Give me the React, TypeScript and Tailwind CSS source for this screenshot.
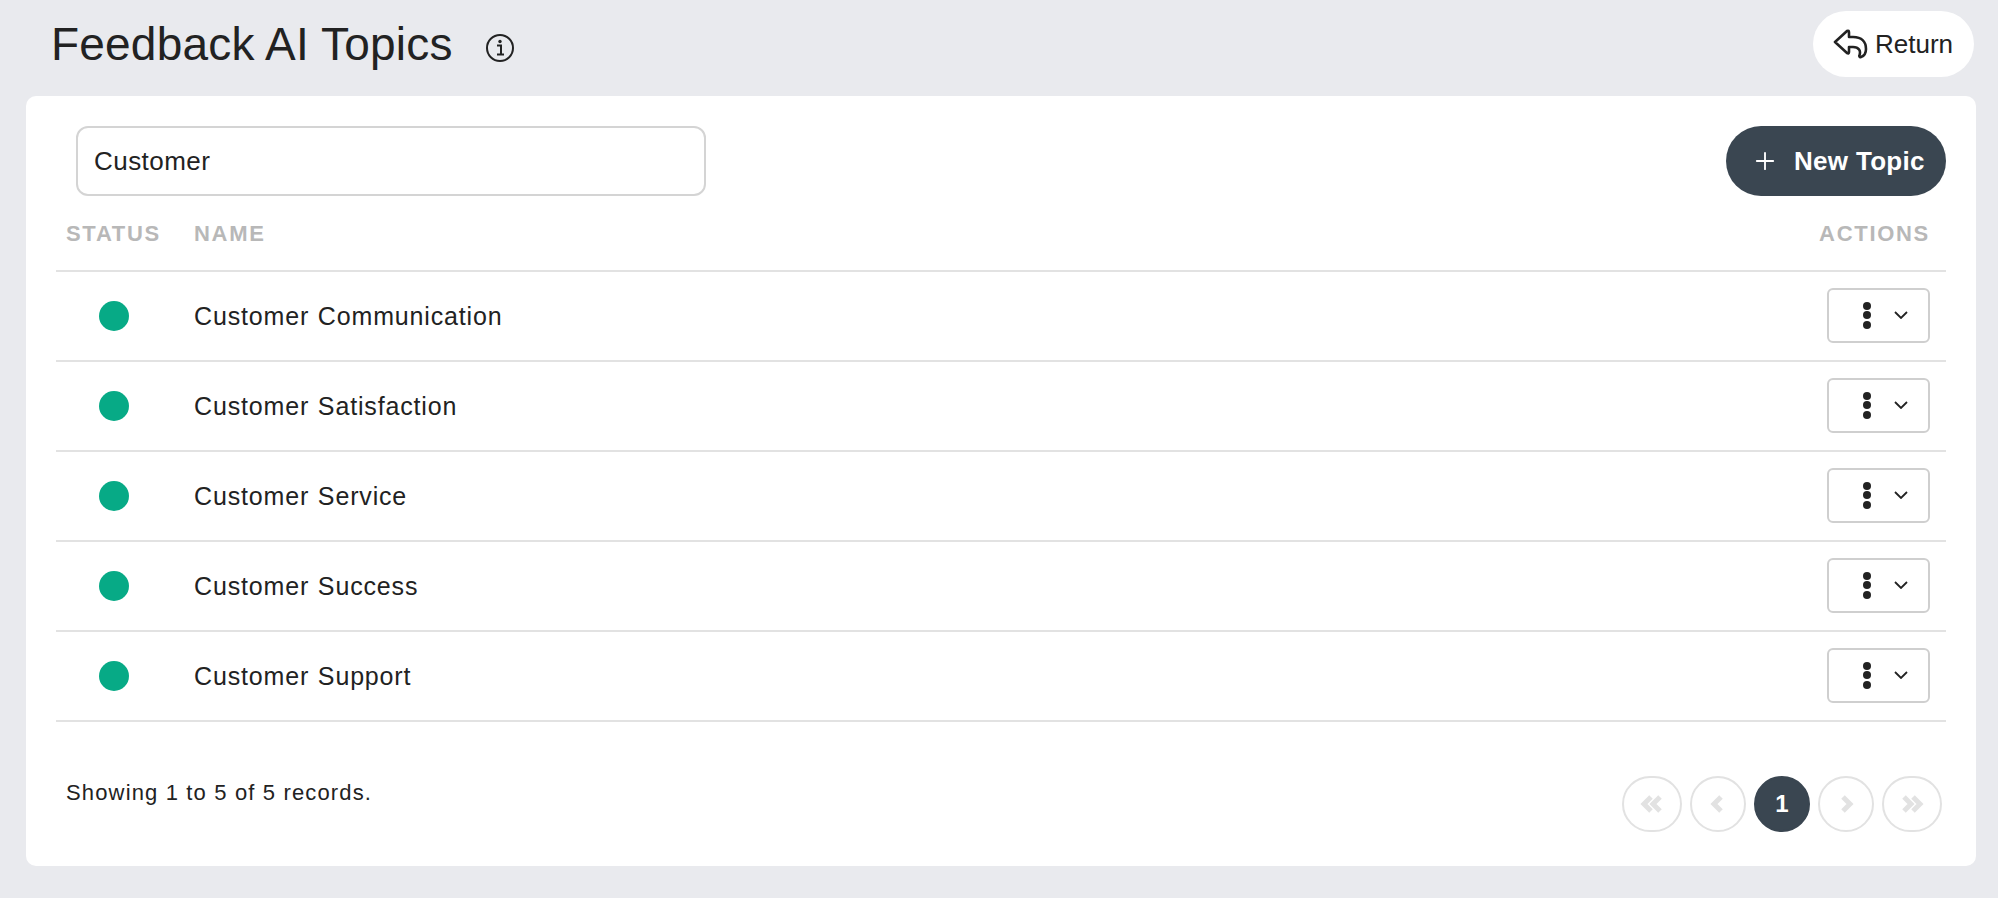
import React from "react";
import { Plus } from "lucide-react";

const rows = ["Customer Communication", "Customer Satisfaction", "Customer Service", "Customer Success", "Customer Support"];

function PageBtn({ w, children, active }: { w: string; children: React.ReactNode; active?: boolean }) {
  return (
    <div className={`${w} h-[56px] rounded-full flex items-center justify-center border-2 ${active ? "bg-[#3a4651] border-[#3a4651] text-white font-bold text-[24px]" : "border-[#e2e2e2] text-[#e2e2e2]"}`}>
      {children}
    </div>
  );
}

function Chev({ d }: { d: string }) {
  return (
    <svg width="24" height="20" viewBox="0 0 24 20" fill="none" stroke="#e2e2e2" strokeWidth="5">
      <path d={d} />
    </svg>
  );
}

export default function App() {
  return (
    <div className="w-[1998px] h-[898px] bg-[#e9eaee] font-['Liberation_Sans',sans-serif] text-[#222] overflow-hidden pt-[11px] pl-[26px] pr-[22px]">
      <div className="h-[66px] flex items-center justify-between mb-[19px]">
        <div className="flex items-center pl-[25px]">
          <span className="text-[46px] leading-[66px] tracking-[0.2px] -mt-[1px]">Feedback AI Topics</span>
          <svg className="ml-[33px] mt-[8px]" width="28" height="28" viewBox="0 0 28 28" fill="none" stroke="#222" strokeWidth="2">
            <circle cx="14" cy="14" r="13" />
            <path d="M11 11.5 H15 V20.5 M11 20.5 H18" />
            <circle cx="14" cy="7.5" r="1.7" fill="#222" stroke="none" />
          </svg>
        </div>
        <div className="w-[161px] h-[66px] rounded-full bg-white flex items-center pl-[20px] gap-[7px] text-[26px] -translate-x-[2px]">
          <svg width="35" height="30" viewBox="0 0 35 30" fill="none" stroke="#222" strokeWidth="2.6" strokeLinejoin="round" strokeLinecap="round">
            <path d="M2 13 L14 2 Q16 1 16 3.5 V8 H20 C29 8 33 13 33 20 C33 24 31 27 28 28 C26.5 28.5 26 27 26.5 26 C28 22 26 18 20 18 H16 V23 Q16 25 14 24 Z" />
          </svg>
          <span>Return</span>
        </div>
      </div>
      <div className="w-[1950px] h-[770px] bg-white rounded-[10px] pt-[30px] px-[30px]">
        <div className="flex justify-between h-[70px]">
          <div className="ml-[20px] w-[630px] h-[70px] rounded-[12px] border-2 border-[#d4d4d4] flex items-center pl-[16px] text-[26px] tracking-[0.45px]">Customer</div>
          <div className="w-[220px] h-[70px] rounded-full bg-[#3a4651] text-white flex items-center pl-[25px] gap-[15px] text-[26px] font-bold tracking-[0.3px]">
            <Plus className="w-[28px] h-[28px]" strokeWidth={1.6} />
            <span>New Topic</span>
          </div>
        </div>
        <div className="flex items-center justify-between h-[76px] border-b-2 border-[#e2e2e2] text-[#b8b8b8] font-bold text-[22px] tracking-[1.7px] px-[10px] pr-[16px]">
          <div className="flex">
            <span className="w-[128px]">STATUS</span>
            <span>NAME</span>
          </div>
          <span>ACTIONS</span>
        </div>
        {rows.map((r) => (
          <div key={r} className="h-[90px] border-b-2 border-[#e2e2e2] flex items-center justify-between pr-[16px]">
            <div className="flex items-center">
              <div className="w-[30px] h-[30px] rounded-full bg-[#07aa86] ml-[43px] mr-[65px]" />
              <span className="text-[25px] tracking-[0.84px] mt-[2px] [word-spacing:1px]">{r}</span>
            </div>
            <div className="w-[103px] h-[55px] rounded-[6px] border-2 border-[#cfcfcf] flex items-center pl-[34px] gap-[23px] mb-[2px]">
              <div className="flex flex-col gap-[1.5px]">
                <div className="w-[8px] h-[8px] rounded-full bg-[#222]" />
                <div className="w-[8px] h-[8px] rounded-full bg-[#222]" />
                <div className="w-[8px] h-[8px] rounded-full bg-[#222]" />
              </div>
              <svg width="14" height="8" viewBox="0 0 14 8" fill="none" stroke="#222" strokeWidth="1.8">
                <path d="M1 1 L7 7 L13 1" />
              </svg>
            </div>
          </div>
        ))}
        <div className="flex justify-between mt-[54px] pr-[4px]">
          <span className="pl-[10px] pt-[1px] text-[22px] tracking-[1.15px] leading-[32px]">Showing 1 to 5 of 5 records.</span>
          <div className="flex gap-[8px]">
            <PageBtn w="w-[60px]"><Chev d="M11 3 L4 10 L11 17 M20 3 L13 10 L20 17" /></PageBtn>
            <PageBtn w="w-[56px]"><Chev d="M15 3 L8 10 L15 17" /></PageBtn>
            <PageBtn w="w-[56px]" active>1</PageBtn>
            <PageBtn w="w-[56px]"><Chev d="M9 3 L16 10 L9 17" /></PageBtn>
            <PageBtn w="w-[60px]"><Chev d="M4 3 L11 10 L4 17 M13 3 L20 10 L13 17" /></PageBtn>
          </div>
        </div>
      </div>
    </div>
  );
}
